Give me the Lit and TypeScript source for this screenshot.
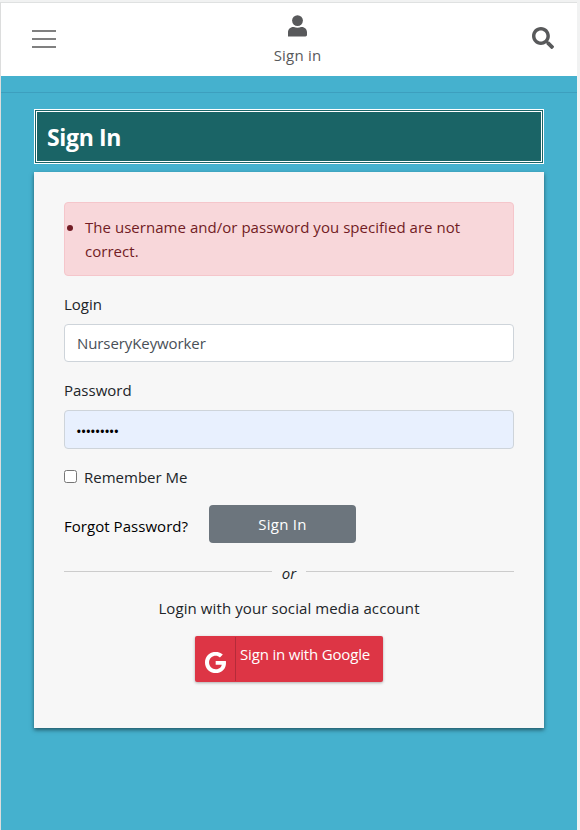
import { LitElement, html, css } from "lit";
import { customElement } from "lit/decorators.js";

@customElement("app-root")
export class AppRoot extends LitElement {
  static styles = css`
    :host {
      display: block;
      box-sizing: border-box;
      height: 830px;
      overflow: hidden;
      padding: 2px 3px 0 0;
      background: #f1f2f2;
      font: 15px/24px "Open Sans", "Noto Sans", sans-serif;
      color: #212529;
    }
    * { box-sizing: border-box; }
    .page {
      height: 828px;
      border-top: 1px solid #dfe1e1;
      border-left: 1px solid #dcdddd;
      background: #45b1ce;
    }
    .top {
      height: 73px;
      background: #fff;
      display: flex;
      justify-content: space-between;
      padding: 0 23px 0 31px;
      color: #58595b;
    }
    .top svg { display: block; }
    .menu {
      width: 24px;
      height: 18px;
      margin-top: 27px;
      display: flex;
      flex-direction: column;
      justify-content: space-between;
    }
    .menu i { height: 2px; background: #808080; }
    .user {
      display: flex;
      flex-direction: column;
      align-items: center;
      padding-top: 12px;
      margin-left: 7px;
      letter-spacing: 0.2px;
    }
    .user svg { margin-bottom: 6px; }
    .search { margin-top: 24px; }
    .rule { height: 17px; border-bottom: 1px solid #3d9fbe; }
    h1 {
      margin: 16px 33px 8px;
      height: 55px;
      padding: 0 10px;
      border: 3px double #fff;
      background: #1a6466;
      color: #fff;
      font-size: 23px;
      font-weight: 700;
      line-height: 50px;
      letter-spacing: -0.35px;
    }
    .card {
      margin: 0 33px;
      height: 556px;
      padding: 30px;
      background: #f7f7f7;
      box-shadow: 0 2px 4px rgba(0, 0, 0, 0.5);
    }
    .alert {
      margin: 0 0 16px;
      height: 74px;
      padding: 12px 20px;
      border: 1px solid #f5c6cb;
      border-radius: 4px;
      background: #f8d7da;
      color: #721c24;
      list-style: none;
      letter-spacing: 0.035px;
    }
    .alert li { position: relative; }
    .alert li::before {
      content: "";
      position: absolute;
      left: -18px;
      top: 10px;
      width: 6px;
      height: 6px;
      border-radius: 50%;
      background: #721c24;
    }
    label { display: block; }
    input.field {
      display: block;
      width: 100%;
      height: 38px;
      margin: 8px 0 16px;
      padding: 0 12px;
      border: 1px solid #ced4da;
      border-radius: 4px;
      background: #fff;
      font: inherit;
      letter-spacing: -0.09px;
      color: #495057;
      outline: none;
    }
    input.field.secret {
      height: 39px;
      padding-top: 2px;
      padding-left: 11px;
      letter-spacing: -0.95px;
      background: #e8f0fe;
      color: #000;
    }
    .remember { display: flex; align-items: center; gap: 7px; }
    .remember input { width: 13px; height: 13px; margin: 0; position: relative; top: -1px; }
    .actions { display: flex; gap: 20px; margin-top: 16px; color: #000; }
    .forgot { width: 125px; line-height: 43px; white-space: nowrap; letter-spacing: 0.04px; }
    .submit {
      width: 147px;
      height: 38px;
      border: 0;
      border-radius: 4px;
      background: #6c757d;
      color: #fff;
      font: inherit;
      letter-spacing: 0.25px;
      padding: 0;
    }
    .or {
      display: flex;
      justify-content: space-between;
      margin-top: 13px;
      height: 24px;
      font-style: italic;
    }
    .or i { width: 208px; height: 1px; margin-top: 10px; background: #ccc; }
    .social { text-align: center; margin-top: 11px; white-space: nowrap; letter-spacing: 0.1px; }
    .google {
      display: flex;
      width: 188px;
      height: 46px;
      margin: 16px auto 0;
      border-radius: 2px;
      background: #dd3545;
      color: #fff;
      box-shadow: 0 1px 3px rgba(0, 0, 0, 0.3);
      white-space: nowrap;
    }
    .mark {
      width: 41px;
      margin: 1px 4px 1px 0;
      border-right: 1px solid #b52b39;
      padding: 15px 0 0 10px;
    }
    .mark svg { display: block; }
    .gtext { padding-top: 6px; letter-spacing: -0.17px; }
  `;

  render() {
    return html`
      <div class="page">
        <div class="top">
          <div class="menu"><i></i><i></i><i></i></div>
          <div class="user">
            <svg width="19" height="22" viewBox="0 0 19 22" fill="#58595b">
              <circle cx="9.5" cy="5.6" r="5.4" />
              <path d="M0 21.4v-4.200C0 14.300 2.300 12 5.200 12h.7c1.100.5 2.300.8 3.600.8s2.500-.3 3.600-.8h.7c2.900 0 5.200 2.300 5.200 5.200v2.600c0 .9-.7 1.600-1.600 1.600z" />
            </svg>
            <span>Sign in</span>
          </div>
          <svg class="search" width="22" height="22" viewBox="0 0 512 512" fill="#58595b">
            <path d="M505 442.700L405.300 343c-4.500-4.500-10.600-7-17-7H372c27.600-35.300 44-79.700 44-128C416 93.100 322.900 0 208 0S0 93.100 0 208s93.100 208 208 208c48.300 0 92.700-16.400 128-44v16.300c0 6.400 2.500 12.500 7 17l99.700 99.700c9.400 9.400 24.600 9.400 33.900 0l28.300-28.300c9.400-9.400 9.400-24.600.1-34zM208 336c-70.700 0-128-57.200-128-128 0-70.700 57.200-128 128-128 70.700 0 128 57.200 128 128 0 70.700-57.200 128-128 128z" />
          </svg>
        </div>
        <div class="rule"></div>
        <h1>Sign In</h1>
        <div class="card">
          <ul class="alert">
            <li>The username and/or password you specified are not correct.</li>
          </ul>
          <label for="login">Login</label>
          <input id="login" class="field" type="text" value="NurseryKeyworker" />
          <label for="password">Password</label>
          <input id="password" class="field secret" type="password" value="password1" />
          <label class="remember"><input type="checkbox" /><span>Remember Me</span></label>
          <div class="actions">
            <span class="forgot">Forgot Password?</span>
            <button class="submit">Sign In</button>
          </div>
          <div class="or"><i></i><span>or</span><i></i></div>
          <div class="social">Login with your social media account</div>
          <div class="google">
            <span class="mark">
              <svg width="21" height="21" viewBox="4 12 480 488" fill="#fff">
                <path d="M488 261.800C488 403.300 391.100 504 248 504 110.800 504 0 393.200 0 256S110.800 8 248 8c66.800 0 123 24.500 166.300 64.900l-67.500 64.900C258.500 52.600 94.300 116.600 94.300 256c0 86.500 69.100 156.600 153.700 156.600 98.200 0 135-70.400 140.800-106.900H248v-85.300h236.100c2.300 12.700 3.900 24.900 3.900 41.400z" />
              </svg>
            </span>
            <span class="gtext">Sign in with Google</span>
          </div>
        </div>
      </div>
    `;
  }
}
